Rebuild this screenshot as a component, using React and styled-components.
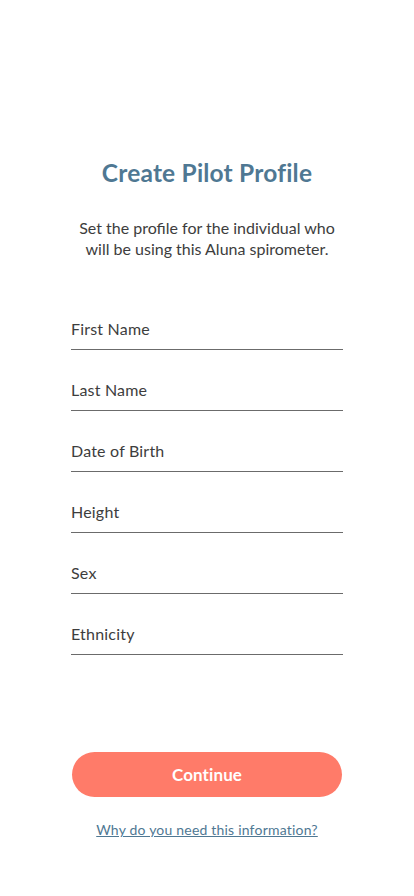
import React from 'react';
import styled, { createGlobalStyle } from 'styled-components';

const GlobalStyle = createGlobalStyle`
  html, body {
    margin: 0;
    padding: 0;
    background: #fff;
  }
  body {
    font-family: Lato, "Noto Sans", Arial, sans-serif;
  }
`;

const Screen = styled.div`
  width: 414px;
  height: 896px;
  display: flex;
  flex-direction: column;
  align-items: center;
  box-sizing: border-box;
  padding-top: 157px;
`;

const Title = styled.h1`
  margin: 0;
  font-size: 24.5px;
  font-weight: 700;
  color: #4f7893;
  letter-spacing: 0.2px;
  line-height: 32px;
`;

const Subtitle = styled.p`
  margin: 28px 0 0;
  width: 272px;
  text-align: center;
  font-size: 16px;
  line-height: 21px;
  color: #3d3d3d;
`;

const Form = styled.div`
  margin-top: 51px;
  width: 272px;
  display: flex;
  flex-direction: column;
`;

const Field = styled.div`
  height: 61px;
  box-sizing: border-box;
  padding-top: 9px;
  display: flex;
  flex-direction: column;
`;

const Label = styled.span`
  font-size: 16px;
  line-height: 20px;
  letter-spacing: 0.2px;
  color: #3d3d3d;
  padding-bottom: 10px;
  border-bottom: 1px solid #6b6b6b;
`;

const Spacer = styled.div`
  flex: 1;
`;

const Button = styled.button`
  width: 270px;
  height: 45px;
  border: none;
  border-radius: 23px;
  background: #ff7b69;
  color: #fff;
  font-family: inherit;
  font-size: 17px;
  font-weight: 700;
  letter-spacing: 0.1px;
  cursor: pointer;
`;

const HelpLink = styled.a`
  margin: 24px 0 58px;
  font-size: 14px;
  letter-spacing: 0.2px;
  color: #4f7893;
  text-decoration: underline;
`;

const fields = ['First Name', 'Last Name', 'Date of Birth', 'Height', 'Sex', 'Ethnicity'];

export default function App() {
  return (
    <Screen>
      <GlobalStyle />
      <Title>Create Pilot Profile</Title>
      <Subtitle>Set the profile for the individual who will be using this Aluna spirometer.</Subtitle>
      <Form>
        {fields.map((f) => (
          <Field key={f}>
            <Label>{f}</Label>
          </Field>
        ))}
      </Form>
      <Spacer />
      <Button>Continue</Button>
      <HelpLink href="#">Why do you need this information?</HelpLink>
    </Screen>
  );
}
